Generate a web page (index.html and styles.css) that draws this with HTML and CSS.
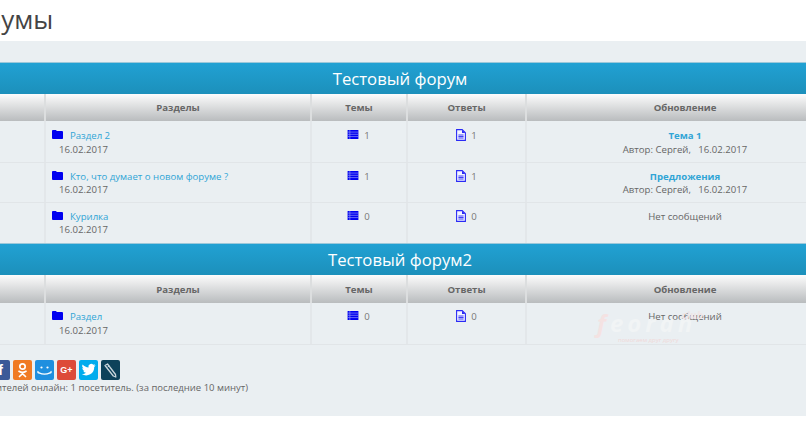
FILE: index.html
```html
<!DOCTYPE html>
<html lang="ru">
<head>
<meta charset="utf-8">
<title>Форумы</title>
<link rel="stylesheet" href="styles.css">
</head>
<body>
<svg class="defs" width="0" height="0" aria-hidden="true">
  <symbol id="folder" viewBox="0 0 12 9" preserveAspectRatio="none"><path d="M0 1C0 .4.400 0 1 0h3c.6 0 1 .4 1.100 1H11c.6 0 1 .4 1 1v6c0 .6-.4 1-1 1H1c-.6 0-1-.4-1-1z" fill="#0000f0"/></symbol>
  <symbol id="list" viewBox="0 0 12 10"><path d="M0 0h12v10H0z" fill="#0000f0"/><path d="M0 2.300h12M0 4.800h12M0 7.300h12M2.500 0v10" stroke="#9aa0f5" stroke-width=".7"/></symbol>
  <symbol id="file" viewBox="0 0 10 12"><path d="M.6.600h5.600l3.200 3.200v7.600H.6z" fill="#f4f6ff" stroke="#2a2af5" stroke-width="1.100"/><path d="M6 .8v3.200h3.200" fill="#2a2af5"/><path d="M2.400 6h5.200M2.400 7.500h5.200M2.400 9h5.200" stroke="#2a2af5" stroke-width=".9"/></symbol>
</svg>
<header class="page-head"><h1>Форумы</h1></header>
<main class="panel">
  <section class="forum">
    <h2 class="forum-title">Тестовый форум</h2>
    <div class="row head">
      <div class="cell"></div><div class="cell">Разделы</div><div class="cell">Темы</div><div class="cell">Ответы</div><div class="cell">Обновление</div>
    </div>
    <div class="row first">
      <div class="cell"></div>
      <div class="cell sect"><div><svg class="ic-folder"><use href="#folder"/></svg><a href="#">Раздел 2</a></div><div class="date">16.02.2017</div></div>
      <div class="cell num topics"><svg class="ic-list"><use href="#list"/></svg>1</div>
      <div class="cell num replies"><svg class="ic-file"><use href="#file"/></svg>1</div>
      <div class="cell upd"><a class="strong" href="#">Тема 1</a><div>Автор: Сергей, &nbsp; 16.02.2017</div></div>
    </div>
    <div class="row short">
      <div class="cell"></div>
      <div class="cell sect"><div><svg class="ic-folder"><use href="#folder"/></svg><a href="#">Кто, что думает о новом форуме ?</a></div><div class="date">16.02.2017</div></div>
      <div class="cell num topics"><svg class="ic-list"><use href="#list"/></svg>1</div>
      <div class="cell num replies"><svg class="ic-file"><use href="#file"/></svg>1</div>
      <div class="cell upd"><a class="strong" href="#">Предложения</a><div>Автор: Сергей, &nbsp; 16.02.2017</div></div>
    </div>
    <div class="row short last">
      <div class="cell"></div>
      <div class="cell sect"><div><svg class="ic-folder"><use href="#folder"/></svg><a href="#">Курилка</a></div><div class="date">16.02.2017</div></div>
      <div class="cell num topics"><svg class="ic-list"><use href="#list"/></svg>0</div>
      <div class="cell num replies"><svg class="ic-file"><use href="#file"/></svg>0</div>
      <div class="cell upd">Нет сообщений</div>
    </div>
  </section>
  <section class="forum">
    <h2 class="forum-title">Тестовый форум2</h2>
    <div class="row head">
      <div class="cell"></div><div class="cell">Разделы</div><div class="cell">Темы</div><div class="cell">Ответы</div><div class="cell">Обновление</div>
    </div>
    <div class="row">
      <div class="cell"></div>
      <div class="cell sect"><div><svg class="ic-folder"><use href="#folder"/></svg><a href="#">Раздел</a></div><div class="date">16.02.2017</div></div>
      <div class="cell num topics"><svg class="ic-list"><use href="#list"/></svg>0</div>
      <div class="cell num replies"><svg class="ic-file"><use href="#file"/></svg>0</div>
      <div class="cell upd">Нет сообщений</div>
    </div>
  </section>
  <div class="watermark"><span class="wm-club">club</span><span class="wm-logo"><span class="wm-f">f</span>eoran</span><span class="wm-sub">помогаем друг другу</span></div>
  <div class="share">
    <a class="btn fb" href="#"><span>f</span></a>
    <a class="btn ok" href="#"><svg viewBox="0 0 19 20"><circle cx="9.500" cy="6.500" r="2.700" fill="none" stroke="#fff" stroke-width="1.700"/><path d="M6 11.300c2 1.300 5 1.300 7 0M9.500 12.500v1.500M6.500 16.500l3-2.800 3 2.800" fill="none" stroke="#fff" stroke-width="1.700" stroke-linecap="round"/></svg></a>
    <a class="btn mm" href="#"><svg viewBox="0 0 19 20"><circle cx="6.500" cy="7.500" r="1.100" fill="#fff"/><circle cx="12.500" cy="7.500" r="1.100" fill="#fff"/><path d="M3 11.500c-.3 1 .2 1.600 1 1.300 3.500 1.700 7.500 1.700 11 0 .8.300 1.300-.3 1-1.300" fill="none" stroke="#fff" stroke-width="1.300" stroke-linecap="round"/></svg></a>
    <a class="btn gp" href="#"><span>G+</span></a>
    <a class="btn tw" href="#"><svg viewBox="0 0 19 20"><path d="M16.500 5.200c-.5.200-1 .4-1.600.4.600-.3 1-.9 1.200-1.500-.5.300-1.100.6-1.800.7a2.800 2.800 0 0 0-4.800 2.600C7.200 7.300 5.100 6.200 3.700 4.500a2.800 2.800 0 0 0 .9 3.800c-.5 0-.9-.1-1.300-.3 0 1.400 1 2.600 2.300 2.800-.4.100-.8.100-1.300 0 .4 1.100 1.400 1.900 2.700 2-1.200.9-2.700 1.400-4.200 1.200a8 8 0 0 0 12.400-7.100c.5-.4 1-.9 1.300-1.700z" fill="#fff"/></svg></a>
    <a class="btn lj" href="#"><svg viewBox="0 0 19 20"><path d="M4 5.500l2.500-1.500 8 10.500.3 2.500-2.500-1z" fill="none" stroke="#c9d6dc" stroke-width="1.300" stroke-linejoin="round"/><path d="M6.500 7l1.800-1.100" stroke="#c9d6dc" stroke-width="1"/></svg></a>
  </div>
  <p class="online">Посетителей онлайн: 1 посетитель. (за последние 10 минут)</p>
</main>
</body>
</html>
```

FILE: styles.css
```css
* { box-sizing: border-box; }
html, body { margin: 0; padding: 0; height: 100%; overflow: hidden; background: #fff; }
body { font-family: "Open Sans", sans-serif; font-size: 9.600px; color: #666; width: 806px; }
.defs { display: block; height: 0; }
.page-head { height: 41px; margin-left: -51px; padding-top: 3px; }
h1 { margin: 0; font-size: 26px; line-height: 32px; font-weight: 400; color: #444; }
.panel {
  position: relative;
  width: 886px;
  height: 375px;
  margin-left: -43px;
  padding-top: 21px;
  background: #eaeff2;
}
.forum-title {
  margin: 0;
  height: 32px;
  line-height: 31px;
  font-size: 16.700px;
  font-weight: 400;
  text-align: center;
  color: #fff;
  background: linear-gradient(#21a1d3, #1c90bb);
  border-top: 1px solid #9cc8da;
}
.row {
  display: grid;
  grid-template-columns: 89px 266px 96px 119px 316px;
  height: 42px;
  border-bottom: 1px solid #e1e5e8;
}
.row.short { height: 40px; }
.row.last { border-bottom: 0; }
.cell { border-right: 2px solid #e3e7ea; padding-top: 7px; line-height: 13px; }
.first .cell { padding-top: 8px; }
.cell:last-child { border-right: 0; }
.head { height: 27px; border-bottom: 0; font-weight: 700; color: #666; text-align: center; background: linear-gradient(#fcfcfc, #b9bcbe); }
.head .cell { border-right: 2px solid #dcdedf; padding-top: 7px; }
.head .cell:last-child { border-right: 0; }
.forum + .forum .head { height: 28px; }
.forum + .forum .head .cell { padding-top: 8px; }
.sect { padding-left: 6px; }
.date { margin: 1px 0 0 7px; }
.short .date { margin-top: 0; }
a { color: #31a5d6; text-decoration: none; }
a.strong { font-weight: 700; }
.ic-folder { width: 11px; height: 9px; margin-right: 7px; vertical-align: 0; }
.num { text-align: center; color: #777; }
.topics { padding-right: 1px; }
.replies { padding-right: 0; }
.ic-list { width: 12px; height: 9px; margin-right: 5px; vertical-align: 0; }
.ic-file { width: 10px; height: 12px; margin-right: 5px; vertical-align: -2px; }
.upd { text-align: center; }
.upd div { margin-top: 1px; }
.short .upd div { margin-top: 0; }
.watermark {
  position: absolute;
  left: 640px;
  top: 268px;
  width: 110px;
  height: 40px;
  display: flex;
  flex-direction: column;
}
.wm-club { position: absolute; right: 4px; top: 0; font-size: 11px; line-height: 12px; font-weight: 700; font-style: italic; color: #efe6e6; }
.wm-logo { font-size: 24px; line-height: 27px; font-weight: 700; font-style: italic; color: #f1f4f5; letter-spacing: 4px; }
.wm-f { color: #f4e2e2; }
.wm-sub { margin-left: 21px; font-size: 6px; line-height: 8px; color: #f0d8d8; }
.share { display: flex; gap: 3px; margin: 15px 0 0 34px; }
.btn { display: flex; width: 19px; height: 20px; border-radius: 2px; align-items: center; justify-content: center; color: #fff; }
.btn svg { width: 19px; height: 20px; }
.fb { background: #3b5998; font: 700 14px/20px "Liberation Sans", sans-serif; }
.ok { background: #f07b24; }
.mm { background: #1f8fdf; }
.gp { background: #dd4b39; font: 700 9px/20px "Liberation Sans", sans-serif; }
.tw { background: #00aced; }
.lj { background: #0d425a; }
.online { margin: 1px 0 0 12px; line-height: 13px; font-size: 9.500px; color: #666; }
```
